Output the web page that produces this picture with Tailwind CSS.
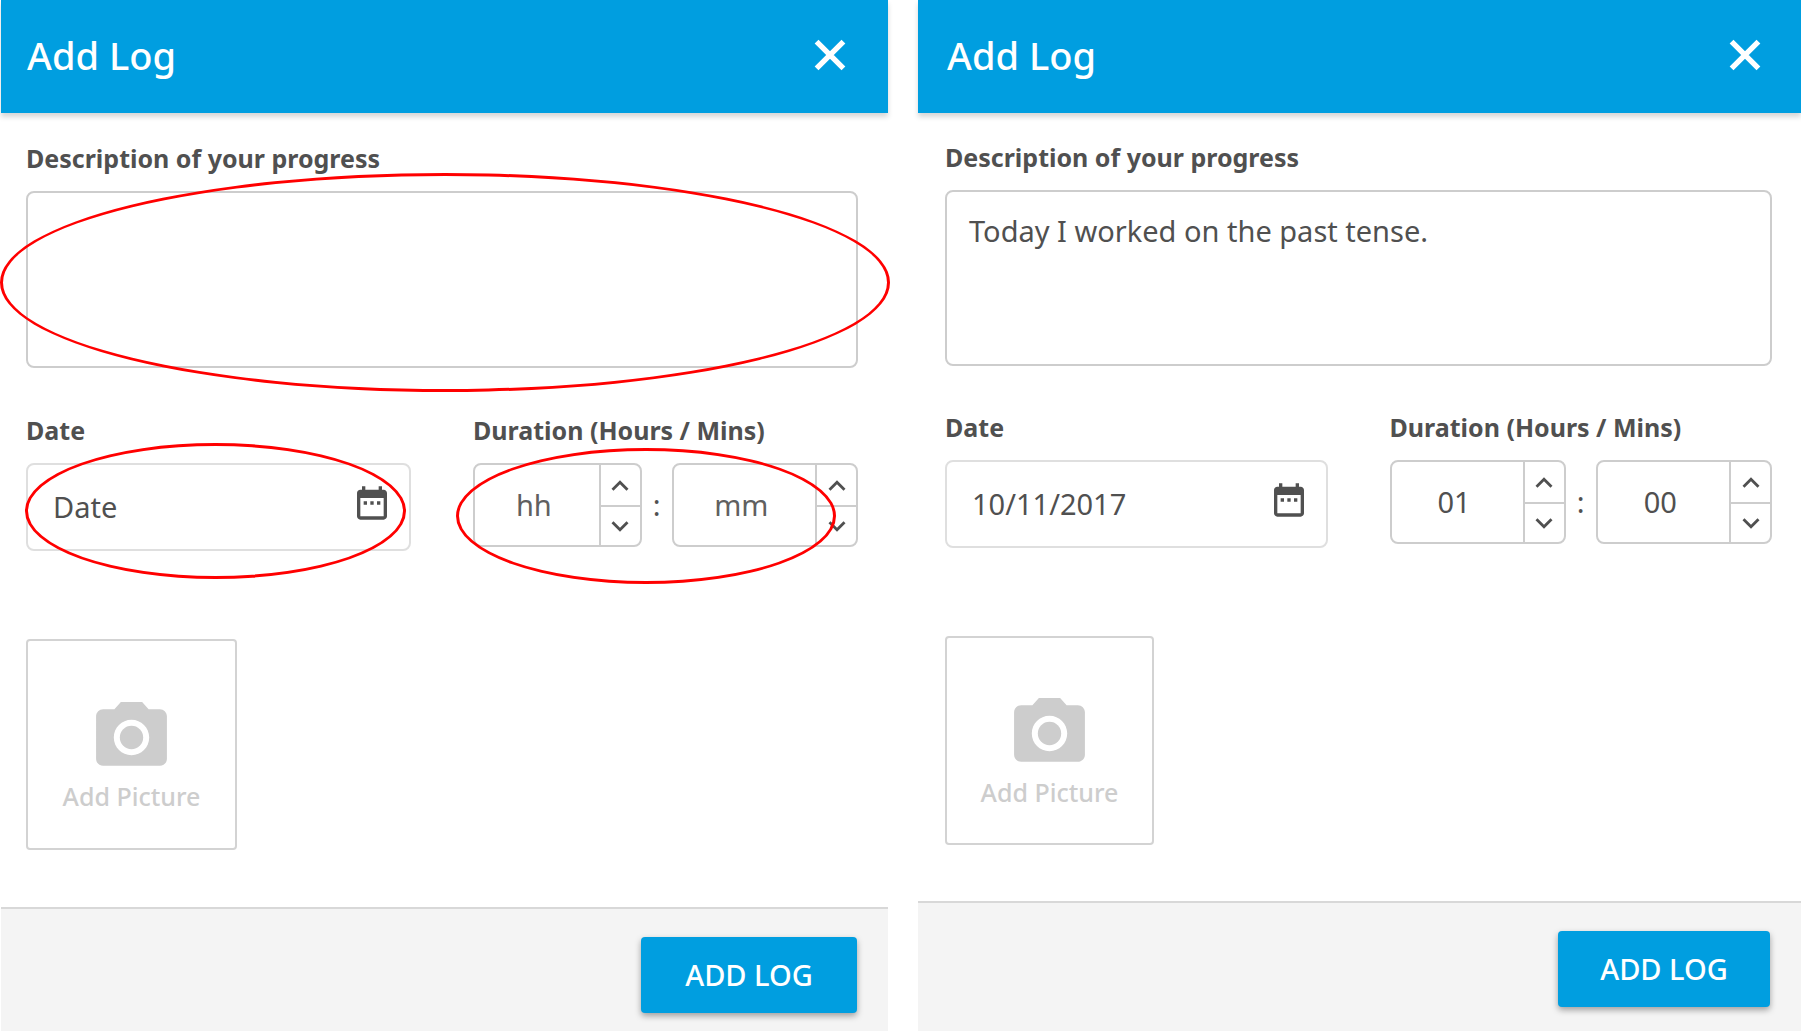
<!DOCTYPE html>
<html lang="en">
<head>
    <meta charset="UTF-8">
    <meta name="viewport" content="width=device-width, initial-scale=1.0">
    <title>Add Log</title>
    <script src="https://cdn.jsdelivr.net/npm/@tailwindcss/browser@4"></script>
</head>
<body class="bg-white font-['Noto_Sans',sans-serif] text-[#505050]">

    <!-- Shared icons -->
    <svg class="hidden">
        <symbol id="close" viewBox="0 0 24 24"><path d="M5.8 5.8l12.4 12.4M18.2 5.8L5.8 18.2" fill="none" stroke="currentColor" stroke-width="2.5"/></symbol>
        <symbol id="calendar" viewBox="0 0 24 24"><path fill="currentColor" d="M9 11H7v2h2v-2zm4 0h-2v2h2v-2zm4 0h-2v2h2v-2zm2-7h-1V2h-2v2H8V2H6v2H5c-1.11 0-1.99.9-1.99 2L3 20c0 1.1.89 2 2 2h14c1.1 0 2-.9 2-2V6c0-1.1-.9-2-2-2zm0 16H5V9h14v11z"/></symbol>
        <symbol id="up" viewBox="0 0 24 24"><path fill="currentColor" d="M12 8l-6 6 1.41 1.41L12 10.83l4.59 4.58L18 14z"/></symbol>
        <symbol id="down" viewBox="0 0 24 24"><path fill="currentColor" d="M16.59 8.59L12 13.17 7.41 8.59 6 10l6 6 6-6z"/></symbol>
        <symbol id="camera" viewBox="0 0 24 24"><circle cx="12" cy="12" r="3.3" fill="currentColor"/><path fill="currentColor" d="M9 2L7.17 4H4c-1.1 0-2 .9-2 2v12c0 1.1.9 2 2 2h16c1.1 0 2-.9 2-2V6c0-1.1-.9-2-2-2h-3.17L15 2H9zm3 15c-2.76 0-5-2.24-5-5s2.24-5 5-5 5 2.24 5 5-2.24 5-5 5z"/></symbol>
    </svg>

    <div class="flex min-h-screen gap-[30px] pl-px">

        <!-- Empty form with the fields to fill in circled -->
        <form class="flex grow-[887] basis-0 flex-col">
            <header class="flex h-[113px] items-center justify-between bg-[#009ee0] pr-8 pb-1 pl-[26px] text-white shadow-[0_4px_5px_rgba(0,0,0,0.16)]">
                <h1 class="text-[38px] leading-[48px] font-medium">Add Log</h1>
                <button type="button" aria-label="Close"><svg class="size-[52px]"><use href="#close"/></svg></button>
            </header>

            <main class="grow pt-[29px] pr-[30px] pl-[25px]">
                <label for="description1" class="block text-[25px] leading-8 font-bold">Description of your progress</label>
                <div class="relative mt-[17px]">
                    <textarea id="description1" class="block h-[177px] w-full resize-none rounded-lg border-2 border-[#cdcdcd] px-[22px] py-5 text-[29px] leading-[38px]"></textarea>
                    <div class="pointer-events-none absolute -top-[18px] -right-8 -bottom-6 -left-[26px] rounded-[50%] border-3 border-[#ff0000]"></div>
                </div>

                <div class="mt-[46px] grid grid-cols-2 gap-[62px]">
                    <div>
                        <label for="date1" class="block text-[25px] leading-8 font-bold">Date</label>
                        <div class="relative mt-[17px] flex h-[88px] items-center rounded-lg border-2 border-[#dfdfdf] pr-[17px] pl-[25px]">
                            <input id="date1" type="text" placeholder="Date" class="h-full w-full min-w-0 pb-0.5 text-[29px] outline-none placeholder:text-[#505050]">
                            <button type="button" aria-label="Pick a date" class="mb-2 shrink-0"><svg class="size-10"><use href="#calendar"/></svg></button>
                            <div class="pointer-events-none absolute -top-[22px] right-[3px] -bottom-[30px] -left-[3px] rounded-[50%] border-3 border-[#ff0000]"></div>
                        </div>
                    </div>
                    <div>
                        <label for="hours1" class="block text-[25px] leading-8 font-bold">Duration (Hours / Mins)</label>
                        <div class="relative mt-[17px] flex h-[84px] items-stretch">
                            <div class="flex grow-[168] basis-0 rounded-lg border-2 border-[#cdcdcd]">
                                <input id="hours1" type="text" placeholder="hh" class="w-full min-w-0 pr-1.5 text-center text-[29px] outline-none placeholder:text-[#606060]">
                                <div class="flex w-[41px] shrink-0 flex-col divide-y-2 divide-[#cdcdcd] border-l-2 border-[#cdcdcd]">
                                    <button type="button" aria-label="More hours" class="flex flex-1 items-center justify-center pt-0.5"><svg class="size-[34px]"><use href="#up"/></svg></button>
                                    <button type="button" aria-label="Fewer hours" class="flex flex-1 items-center justify-center"><svg class="size-[34px]"><use href="#down"/></svg></button>
                                </div>
                            </div>
                            <span class="flex w-[30px] items-center justify-center text-[29px]">:</span>
                            <div class="flex grow-[186] basis-0 rounded-lg border-2 border-[#cdcdcd]">
                                <input aria-label="Minutes" type="text" placeholder="mm" class="w-full min-w-0 pr-1.5 text-center text-[29px] outline-none placeholder:text-[#606060]">
                                <div class="flex w-[41px] shrink-0 flex-col divide-y-2 divide-[#cdcdcd] border-l-2 border-[#cdcdcd]">
                                    <button type="button" aria-label="More minutes" class="flex flex-1 items-center justify-center pt-0.5"><svg class="size-[34px]"><use href="#up"/></svg></button>
                                    <button type="button" aria-label="Fewer minutes" class="flex flex-1 items-center justify-center"><svg class="size-[34px]"><use href="#down"/></svg></button>
                                </div>
                            </div>
                            <div class="pointer-events-none absolute -top-[15px] right-[22px] -bottom-[37px] -left-[17px] rounded-[50%] border-3 border-[#ff0000]"></div>
                        </div>
                    </div>
                </div>

                <button type="button" class="mt-[88px] flex size-[211px] flex-col items-center justify-center rounded-sm border-2 border-[#d3d3d3] pt-[18px] text-[#cdcdcd]">
                    <svg class="size-[85px]"><use href="#camera"/></svg>
                    <span class="text-[25px] leading-8 font-medium">Add Picture</span>
                </button>
            </main>

            <footer class="flex h-[124px] items-start justify-end border-t-2 border-[#d8d8d8] bg-[#f4f4f4] pt-7 pr-[31px]">
                <button type="submit" class="h-[76px] w-[216px] rounded-sm bg-[#009ee0] text-[29px] font-medium text-white shadow-[0_3px_6px_rgba(0,0,0,0.35)]">ADD LOG</button>
            </footer>
        </form>

        <!-- The same form filled in -->
        <form class="flex grow-[883] basis-0 flex-col">
            <header class="flex h-[113px] items-center justify-between bg-[#009ee0] pr-[30px] pb-1 pl-[29px] text-white shadow-[0_4px_5px_rgba(0,0,0,0.16)]">
                <h1 class="text-[38px] leading-[48px] font-medium">Add Log</h1>
                <button type="button" aria-label="Close"><svg class="size-[52px]"><use href="#close"/></svg></button>
            </header>

            <main class="grow pt-7 pr-[29px] pl-[27px]">
                <label for="description2" class="block text-[25px] leading-8 font-bold">Description of your progress</label>
                <textarea id="description2" class="mt-[17px] block h-[176px] w-full resize-none rounded-lg border-2 border-[#cdcdcd] px-[22px] py-5 text-[29px] leading-[38px]">Today I worked on the past tense.</textarea>

                <div class="mt-[45px] grid grid-cols-2 gap-[62px]">
                    <div>
                        <label for="date2" class="block text-[25px] leading-8 font-bold">Date</label>
                        <div class="mt-[17px] flex h-[88px] items-center rounded-lg border-2 border-[#dfdfdf] pr-[17px] pl-[25px]">
                            <input id="date2" type="text" value="10/11/2017" class="h-full w-full min-w-0 pb-0.5 text-[29px] outline-none">
                            <button type="button" aria-label="Pick a date" class="mb-2 shrink-0"><svg class="size-10"><use href="#calendar"/></svg></button>
                        </div>
                    </div>
                    <div>
                        <label for="hours2" class="block text-[25px] leading-8 font-bold">Duration (Hours / Mins)</label>
                        <div class="mt-[17px] flex h-[84px] items-stretch">
                            <div class="flex flex-1 rounded-lg border-2 border-[#cdcdcd]">
                                <input id="hours2" type="text" value="01" class="w-full min-w-0 pr-1.5 text-center text-[29px] outline-none">
                                <div class="flex w-[41px] shrink-0 flex-col divide-y-2 divide-[#cdcdcd] border-l-2 border-[#cdcdcd]">
                                    <button type="button" aria-label="More hours" class="flex flex-1 items-center justify-center pt-0.5"><svg class="size-[34px]"><use href="#up"/></svg></button>
                                    <button type="button" aria-label="Fewer hours" class="flex flex-1 items-center justify-center"><svg class="size-[34px]"><use href="#down"/></svg></button>
                                </div>
                            </div>
                            <span class="flex w-[30px] items-center justify-center text-[29px]">:</span>
                            <div class="flex flex-1 rounded-lg border-2 border-[#cdcdcd]">
                                <input aria-label="Minutes" type="text" value="00" class="w-full min-w-0 pr-1.5 text-center text-[29px] outline-none">
                                <div class="flex w-[41px] shrink-0 flex-col divide-y-2 divide-[#cdcdcd] border-l-2 border-[#cdcdcd]">
                                    <button type="button" aria-label="More minutes" class="flex flex-1 items-center justify-center pt-0.5"><svg class="size-[34px]"><use href="#up"/></svg></button>
                                    <button type="button" aria-label="Fewer minutes" class="flex flex-1 items-center justify-center"><svg class="size-[34px]"><use href="#down"/></svg></button>
                                </div>
                            </div>
                        </div>
                    </div>
                </div>

                <button type="button" class="mt-[88px] flex size-[209px] flex-col items-center justify-center rounded-sm border-2 border-[#d3d3d3] pt-[18px] text-[#cdcdcd]">
                    <svg class="size-[85px]"><use href="#camera"/></svg>
                    <span class="text-[25px] leading-8 font-medium">Add Picture</span>
                </button>
            </main>

            <footer class="flex h-[130px] items-start justify-end border-t-2 border-[#d8d8d8] bg-[#f4f4f4] pt-7 pr-[31px]">
                <button type="submit" class="h-[76px] w-[212px] rounded-sm bg-[#009ee0] text-[29px] font-medium text-white shadow-[0_3px_6px_rgba(0,0,0,0.35)]">ADD LOG</button>
            </footer>
        </form>
    </div>

</body>
</html>
